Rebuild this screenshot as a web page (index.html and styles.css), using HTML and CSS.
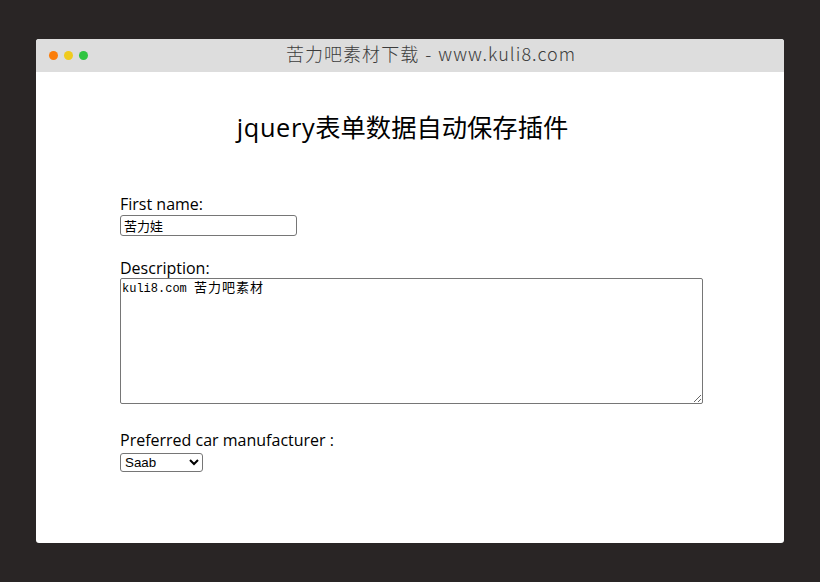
FILE: index.html
```html
<!DOCTYPE html>
<html lang="zh-CN">
<head>
    <meta charset="UTF-8">
    <title>jquery表单数据自动保存插件</title>
    <link rel="stylesheet" href="styles.css">
</head>
<body>

    <div class="window">
        <div class="titlebar">
            <div class="dots">
                <span class="dot dot-orange"></span>
                <span class="dot dot-yellow"></span>
                <span class="dot dot-green"></span>
            </div>
            <div class="title">苦力吧素材下载 - www.kuli8.com</div>
        </div>

        <div class="content">
            <h1><span class="latin">jquery</span>表单数据自动保存插件</h1>

            <form class="form">
                <div class="field field-first">
                    <label for="firstname">First name:</label>
                    <input class="text-input" id="firstname" type="text" value="苦力娃">
                </div>
                <div class="field field-wide">
                    <label for="description">Description:</label>
                    <div class="text-area" id="description" role="textbox" contenteditable="true"><span class="mono">kuli8.com </span><span class="cjk">苦力吧素材</span></div>
                </div>
                <div class="field">
                    <label for="car">Preferred car manufacturer :</label>
                    <select class="select" id="car">
                        <option>Saab</option>
                        <option>Volvo</option>
                        <option>Mercedes</option>
                        <option>Audi</option>
                    </select>
                </div>
            </form>
        </div>
    </div>

</body>
</html>
```

FILE: styles.css
```css
* {
    box-sizing: border-box;
}
html, body {
    margin: 0;
    height: 100%;
}
body {
    background-color: #292525;
    padding: 39px 36px;
    font-family: "Open Sans", "Noto Sans CJK SC", sans-serif;
    color: #000;
}
.window {
    height: 504px;
    background-color: #fff;
    border-radius: 3px;
    overflow: hidden;
}
.titlebar {
    position: relative;
    height: 33px;
    background-color: #dddddd;
    display: flex;
    align-items: center;
    justify-content: center;
    padding-left: 42px;
}
.dots {
    position: absolute;
    left: 13px;
    top: 12px;
    display: flex;
    gap: 6px;
}
.dot {
    width: 9px;
    height: 9px;
    border-radius: 50%;
}
.dot-orange { background-color: #fb7d0a; }
.dot-yellow { background-color: #f0cb1e; }
.dot-green { background-color: #2fc440; }
.title {
    font-family: "Noto Sans CJK SC", sans-serif;
    font-size: 18px;
    font-weight: 300;
    line-height: 29px;
    height: 33px;
    letter-spacing: 1.05px;
    word-spacing: 1px;
    color: #3c3c3c;
}
.content {
    width: 565px;
    margin-left: 84px;
}
h1 {
    margin: 0;
    padding-top: 35px;
    font-size: 25.3px;
    font-weight: 400;
    line-height: 40px;
    text-align: center;
}
h1 .latin {
    letter-spacing: 0.65px;
}
.form {
    padding-top: 46px;
}
.field {
    margin-bottom: 20px;
}
.field-first {
    margin-bottom: 21px;
}
.field-wide {
    margin-bottom: 25px;
}
label {
    display: block;
    font-size: 16px;
    line-height: 22px;
}
.field-wide label {
    line-height: 23px;
    margin-bottom: -2px;
}
.text-input, .text-area, .select {
    display: block;
    font-size: 13px;
    color: #000;
    background-color: #fff;
    border: 1px solid #767676;
    border-radius: 3px;
}
.text-input {
    width: 177px;
    height: 21px;
    padding: 1px 3px;
    font-family: "Liberation Sans", "Noto Sans CJK SC", sans-serif;
}
.text-area {
    width: 583px;
    height: 126px;
    padding: 1px 1px;
    line-height: 14px;
    overflow: auto;
    resize: both;
    border-radius: 2px;
}
.text-area .mono {
    font-family: "Liberation Mono", monospace;
    font-size: 12px;
}
.text-area .cjk {
    font-family: "Noto Sans CJK SC", sans-serif;
    font-size: 13px;
    letter-spacing: 1px;
}
.select {
    width: 83px;
    height: 19px;
    margin-top: 2px;
    font-size: 13.33px;
    font-family: "Liberation Sans", sans-serif;
}
```
